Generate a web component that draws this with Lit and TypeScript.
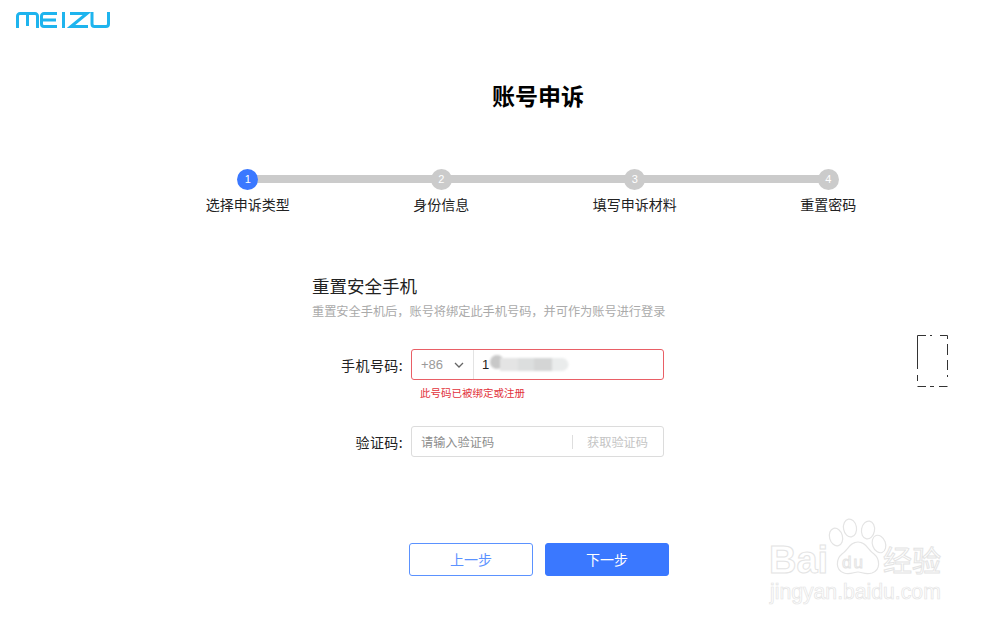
import { LitElement, html, css, svg } from "lit";
import { customElement } from "lit/decorators.js";

const STEPS = ["选择申诉类型", "身份信息", "填写申诉材料", "重置密码"];

@customElement("app-root")
export class AppRoot extends LitElement {
  static styles = css`
    :host {
      display: block;
      position: relative;
      width: 1000px;
      height: 626px;
      overflow: hidden;
      background: #fff;
      color: #1a1a1a;
      font-family: "Noto Sans CJK SC", "Liberation Sans", sans-serif;
    }
    .logo { display: block; margin: 12px 0 0 16px; width: 94px; height: 16px; }
    .title {
      margin: 0;
      padding-top: 50px;
      padding-left: 76px;
      height: 34px;
      line-height: 34px;
      font-size: 23px;
      font-weight: 700;
      color: #000;
      text-align: center;
    }
    .steps {
      display: grid;
      grid-template-columns: repeat(4, 193.5px);
      margin: 57px 0 0 151px;
      position: relative;
    }
    .track {
      position: absolute;
      left: 97px;
      top: 6px;
      width: 580px;
      height: 8px;
      background: #cbcbcb;
    }
    .step { display: flex; flex-direction: column; align-items: center; position: relative; }
    .dot {
      width: 21px;
      height: 21px;
      border-radius: 50%;
      background: #cbcbcb;
      color: #fff;
      font: 11px/21px "Liberation Sans", sans-serif;
      text-align: center;
    }
    .step.on .dot { background: #3a78ff; }
    .label { margin-top: 4px; font-size: 14px; line-height: 20px; color: #222; white-space: nowrap; }
    .form { margin: 59px 0 0 312px; width: 360px; }
    .form h2 { margin: 0; font-size: 17.5px; font-weight: 400; line-height: 26px; color: #222; white-space: nowrap; }
    .sub { margin-top: 3px; font-size: 12.2px; line-height: 18px; color: #aaa; white-space: nowrap; }
    .fields { margin-left: 312px; }
    .row { display: flex; align-items: center; }
    .row.phone { margin-top: 29px; }
    .row.code { margin-top: 25px; }
    .lab { width: 91px; text-align: right; font-size: 14px; letter-spacing: 0.4px; color: #222; white-space: nowrap; }
    .box {
      margin-left: 8px;
      width: 253px;
      height: 31px;
      box-sizing: border-box;
      border: 1px solid #dcdcdc;
      border-radius: 3px;
      display: flex;
      align-items: center;
      position: relative;
      font-size: 12.2px;
    }
    .box.err { border-color: #e95f66; }
    .cc {
      width: 62px;
      height: 100%;
      box-sizing: border-box;
      border-right: 1px solid #e3e3e3;
      display: flex;
      align-items: center;
      padding-left: 9px;
      gap: 11px;
      color: #9a9a9a;
      font: 13px "Liberation Sans", sans-serif;
    }
    .cc svg { width: 10px; height: 6px; }
    .num { margin-left: 8px; font: 13px "Liberation Sans", sans-serif; color: #222; }
    .blur { position: absolute; left: 76px; top: 4px; width: 82px; height: 19px; filter: blur(1px); }
    .msg { margin: 5px 0 0 108px; height: 16px; line-height: 16px; font-size: 10.5px; color: #e2323c; white-space: nowrap; }
    .ph { margin-left: 9px; color: #8d8d8d; flex: 1; white-space: nowrap; }
    .get {
      border-left: 1px solid #dedede;
      height: 14px;
      line-height: 14px;
      margin-right: 15px;
      padding-left: 14px;
      color: #c4c4c4;
      white-space: nowrap;
    }
    .btns { display: flex; gap: 12px; margin: 86px 0 0 409px; }
    .btn {
      width: 124px;
      height: 33px;
      box-sizing: border-box;
      border-radius: 3px;
      border: 1px solid #5b92ff;
      font-size: 14px;
      line-height: 31px;
      text-align: center;
      color: #5b92ff;
      background: #fff;
    }
    .btn.primary { border-color: #3a78ff; background: #3a78ff; color: #fff; }
    .dash { position: absolute; left: 914px; top: 333px; width: 36px; height: 56px; }
    .wm { position: absolute; left: 766px; top: 518px; width: 190px; height: 90px; }
    .wm text { fill: #fff; stroke: #e4e4e4; stroke-width: 1; font-family: "Liberation Sans", sans-serif; }
    .wm text.cn { font-family: "Noto Sans CJK SC", sans-serif; }
    .wm text.url { stroke-width: 0.7; }
    .wm text.du { letter-spacing: 2px; }
  `;

  private logo() {
    return svg`<g fill="none" stroke="#1eb4ee" stroke-width="3">
      <path d="M1.500 16V4a2.500 2.500 0 0 1 2.500-2.500H19a2.500 2.500 0 0 1 2.500 2.500V16M11.500 2V14"/>
      <path d="M41 1.500H28a2.500 2.500 0 0 0-2.500 2.500V12a2.500 2.500 0 0 0 2.500 2.500H41M26 8H40"/>
      <path d="M47.500 0V16"/>
      <path d="M54 1.500H71L55 14.500H72"/>
      <path d="M76 0V12a2.500 2.500 0 0 0 2.500 2.500H90a2.500 2.500 0 0 0 2.500-2.500V0"/>
    </g>`;
  }

  render() {
    return html`
      <svg class="logo" viewBox="0 0 94 16">${this.logo()}</svg>
      <h1 class="title">账号申诉</h1>
      <div class="steps">
        <div class="track"></div>
        ${STEPS.map(
          (s, i) => html`<div class="step ${i === 0 ? "on" : ""}">
            <div class="dot">${i + 1}</div>
            <span class="label">${s}</span>
          </div>`
        )}
      </div>
      <div class="form">
        <h2>重置安全手机</h2>
        <div class="sub">重置安全手机后，账号将绑定此手机号码，并可作为账号进行登录</div>
      </div>
      <div class="fields">
        <div class="row phone">
          <div class="lab">手机号码:</div>
          <div class="box err">
            <div class="cc">+86
              <svg viewBox="0 0 10 6"><path d="M1 1l4 4 4-4" fill="none" stroke="#666" stroke-width="1.3"/></svg>
            </div>
            <span class="num">1</span>
            <svg class="blur" viewBox="0 0 82 19">
              <circle cx="9" cy="8" r="7" fill="#c8c8c8"/>
              <rect x="12" y="4" width="18" height="13" fill="#e4e4e4"/>
              <rect x="30" y="4" width="16" height="13" fill="#dcdede"/>
              <rect x="46" y="4" width="18" height="13" fill="#d4d5d5"/>
              <rect x="64" y="4" width="10" height="13" fill="#eaecec"/>
              <circle cx="74" cy="10.500" r="6.500" fill="#eaecec"/>
            </svg>
          </div>
        </div>
        <div class="msg">此号码已被绑定或注册</div>
        <div class="row code">
          <div class="lab">验证码:</div>
          <div class="box">
            <span class="ph">请输入验证码</span>
            <span class="get">获取验证码</span>
          </div>
        </div>
      </div>
      <div class="btns">
        <div class="btn">上一步</div>
        <div class="btn primary">下一步</div>
      </div>
      <svg class="dash" viewBox="0 0 36 56">
        <g fill="none" stroke="#333" stroke-width="1">
          <path d="M3.500 2.500V36M3.500 42V48" />
          <path d="M3.500 2.500H12M16 2.500H18M26 2.500H33.500" />
          <path d="M33.500 2.500V6M33.500 11V22M33.500 27V37M33.500 42V44" />
          <path d="M3.500 53.500H12M16 53.500H20M25 53.500H33.500" />
        </g>
      </svg>
      <svg class="wm" viewBox="0 0 190 90">
        <g fill="#fff" stroke="#e4e4e4" stroke-width="1.2" transform="translate(10 0)">
          <ellipse cx="60" cy="19" rx="6.500" ry="9" transform="rotate(-15 60 19)"/>
          <ellipse cx="74" cy="10" rx="6.500" ry="9" transform="rotate(-10 74 10)"/>
          <ellipse cx="92" cy="12" rx="6.500" ry="9" transform="rotate(10 92 12)"/>
          <ellipse cx="103" cy="26" rx="6.500" ry="9" transform="rotate(-20 103 26)"/>
          <path d="M82 24c8 0 10 8 16 12 6 5 7 16-2 19-7 2-10-1-14-1s-8 3-14 1c-9-3-8-14-2-19 6-4 8-12 16-12z"/>
        </g>
        <text x="3" y="55" font-size="38" font-weight="700">Bai</text>
        <text class="du" x="76" y="50" font-size="17">du</text>
        <text class="cn" x="117" y="54" font-size="29">经验</text>
        <text class="url" x="4" y="81" font-size="21.200">jingyan.baidu.com</text>
      </svg>
    `;
  }
}
